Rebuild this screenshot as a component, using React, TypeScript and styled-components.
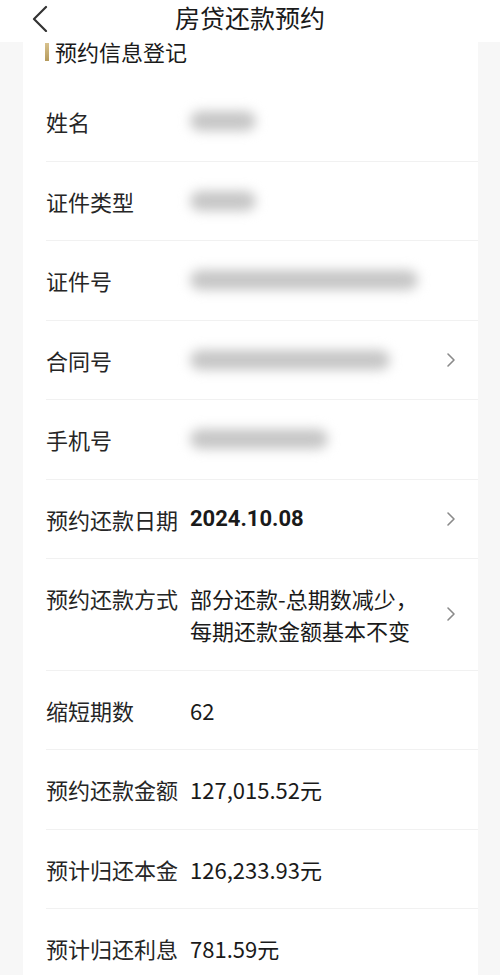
import React from "react";
import styled, { createGlobalStyle } from "styled-components";

const GlobalStyle = createGlobalStyle`
  html, body {
    margin: 0;
    padding: 0;
    background: #f7f7f7;
    font-family: "Noto Sans CJK SC", "Noto Sans", Roboto, sans-serif;
    color: #222;
  }
`;

type RowData = {
  label: string;
  value?: React.ReactNode;
  blur?: number;
  bold?: boolean;
  arrow?: boolean;
};

const rows: RowData[] = [
  { label: "姓名", blur: 66 },
  { label: "证件类型", blur: 66 },
  { label: "证件号", blur: 228 },
  { label: "合同号", blur: 200, arrow: true },
  { label: "手机号", blur: 138 },
  { label: "预约还款日期", value: "2024.10.08", bold: true, arrow: true },
  {
    label: "预约还款方式",
    value: (
      <>
        部分还款-总期数减少，
        <br />
        每期还款金额基本不变
      </>
    ),
    arrow: true,
  },
  { label: "缩短期数", value: "62" },
  { label: "预约还款金额", value: "127,015.52元" },
  { label: "预计归还本金", value: "126,233.93元" },
  { label: "预计归还利息", value: "781.59元" },
];

const Back = () => (
  <svg width="16" height="28" viewBox="0 0 16 28">
    <polyline points="14,3 2,15 14,27" fill="none" stroke="#333" strokeWidth="2.2" strokeLinecap="round" strokeLinejoin="round" />
  </svg>
);

const Chevron = () => (
  <svg width="10" height="16" viewBox="0 0 10 16">
    <polyline points="2,2 8,8 2,14" fill="none" stroke="#8a8a8a" strokeWidth="1.6" strokeLinecap="round" strokeLinejoin="round" />
  </svg>
);

export default function App() {
  return (
    <>
      <GlobalStyle />
      <Page>
        <Header>
          <BackBtn>
            <Back />
          </BackBtn>
          <Title>房贷还款预约</Title>
          <span />
        </Header>
        <Main>
          <Card>
            <SectionTitle>
              <Bar />
              预约信息登记
            </SectionTitle>
            {rows.map((r) => (
              <Row key={r.label}>
                <Label>{r.label}</Label>
                <Value $bold={r.bold}>
                  {r.blur ? <Blur $w={r.blur} /> : r.value}
                </Value>
                <Arrow>{r.arrow && <Chevron />}</Arrow>
              </Row>
            ))}
          </Card>
        </Main>
      </Page>
    </>
  );
}

const Page = styled.div`
  width: 500px;
  min-height: 975px;
  overflow: hidden;
`;

const Header = styled.div`
  height: 42px;
  background: #fff;
  display: grid;
  grid-template-columns: 1fr auto 1fr;
  align-items: center;
`;

const BackBtn = styled.div`
  padding-left: 32px;
  display: flex;
  align-items: center;
  margin-top: -6px;
`;

const Title = styled.div`
  font-size: 25px;
  color: #1a1a1a;
  margin-top: -9px;
`;

const Main = styled.div`
  padding: 0 22px 0 23px;
`;

const Card = styled.div`
  background: #fff;
`;

const SectionTitle = styled.div`
  height: 41px;
  display: flex;
  align-items: flex-start;
  padding-left: 22px;
  font-size: 22px;
  line-height: 20px;
  color: #1a1a1a;
  gap: 6px;
  margin-top: -1px;
`;

const Bar = styled.span`
  width: 4px;
  height: 18px;
  margin-top: 2px;
  background: linear-gradient(180deg, #d8c28e, #b59a5c);
`;

const Row = styled.div`
  margin-left: 23px;
  padding: 23px 22px 23.5px 0;
  display: flex;
  align-items: center;
  border-bottom: 1px solid #f1f1f1;
  &:last-child {
    border-bottom: none;
  }
`;

const Label = styled.div`
  width: 144px;
  flex-shrink: 0;
  align-self: flex-start;
  font-size: 22px;
  color: #262626;
  line-height: 32px;
`;

const Value = styled.div<{ $bold?: boolean }>`
  flex: 1;
  min-height: 32px;
  font-size: 22px;
  line-height: 32px;
  color: #1a1a1a;
  font-weight: ${(p) => (p.$bold ? 700 : 400)};
  font-family: ${(p) => (p.$bold ? `Roboto, "Noto Sans CJK SC", sans-serif` : `"Noto Sans CJK SC", Roboto, sans-serif`)};
`;

const Blur = styled.span<{ $w: number }>`
  display: block;
  margin-top: 6px;
  width: ${(p) => p.$w}px;
  height: 20px;
  border-radius: 10px;
  background: #c6c6c6;
  filter: blur(6px);
`;

const Arrow = styled.div`
  width: 10px;
  display: flex;
  align-items: center;
`;
